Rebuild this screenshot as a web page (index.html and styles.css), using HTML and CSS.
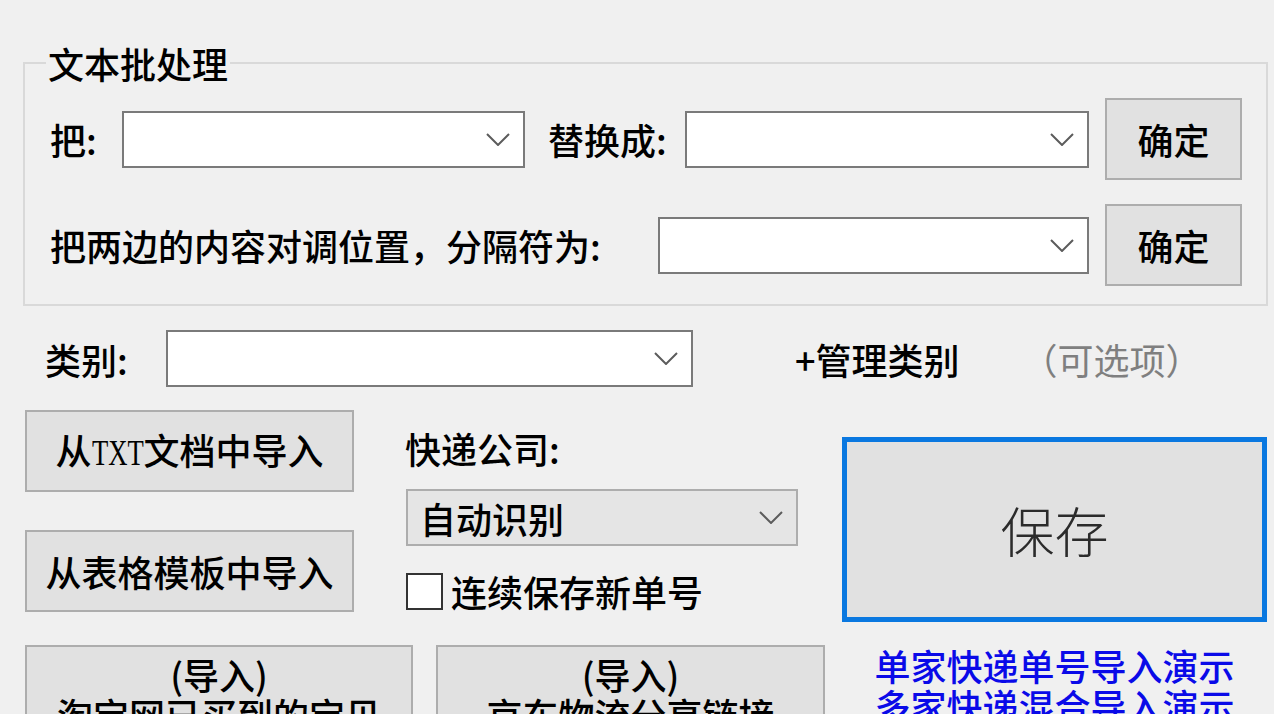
FILE: index.html
```html
<!DOCTYPE html>
<html lang="zh-CN">
<head>
<meta charset="utf-8">
<title>文本批处理</title>
<link rel="stylesheet" href="styles.css">
</head>
<body>
<div class="app">
  <fieldset class="group">
    <legend class="group-title">文本批处理</legend>
    <div class="group-row">
      <span class="lbl lbl-ba">把:</span>
      <div class="combo combo-w1"><svg class="chev" viewBox="0 0 24 13"><polyline points="1,1 12,12 23,1"/></svg></div>
      <span class="lbl lbl-replace">替换成:</span>
      <div class="combo combo-w2"><svg class="chev" viewBox="0 0 24 13"><polyline points="1,1 12,12 23,1"/></svg></div>
      <button class="btn btn-ok">确定</button>
    </div>
    <div class="group-row">
      <span class="lbl lbl-swap">把两边的内容对调位置，分隔符为:</span>
      <div class="combo combo-w3"><svg class="chev" viewBox="0 0 24 13"><polyline points="1,1 12,12 23,1"/></svg></div>
      <button class="btn btn-ok">确定</button>
    </div>
  </fieldset>

  <div class="cat-row">
    <span class="lbl lbl-cat">类别:</span>
    <div class="combo combo-cat"><svg class="chev" viewBox="0 0 24 13"><polyline points="1,1 12,12 23,1"/></svg></div>
    <span class="manage">+管理类别</span>
    <span class="optional">（可选项）</span>
  </div>

  <div class="main">
    <div class="left">
      <div class="left-top">
        <div class="col-import">
          <button class="btn btn-import">从<span class="txt">TXT</span>文档中导入</button>
          <button class="btn btn-import">从表格模板中导入</button>
        </div>
        <div class="col-express">
          <div class="lbl express-lbl">快递公司:</div>
          <div class="combo combo-list"><span>自动识别</span><svg class="chev" viewBox="0 0 24 13"><polyline points="1,1 12,12 23,1"/></svg></div>
          <label class="check"><span class="box"></span><span>连续保存新单号</span></label>
        </div>
      </div>
      <div class="left-bottom">
        <button class="btn btn-wide btn-taobao"><span>(导入)</span><span>淘宝网已买到的宝贝</span></button>
        <button class="btn btn-wide btn-jd"><span>(导入)</span><span>京东物流分享链接</span></button>
      </div>
    </div>
    <div class="right">
      <button class="btn-save">保存</button>
      <a class="demo-link demo-first" href="#">单家快递单号导入演示</a>
      <a class="demo-link" href="#">多家快递混合导入演示</a>
    </div>
  </div>
</div>
</body>
</html>
```

FILE: styles.css
```css
* { box-sizing: border-box; }
html, body { margin: 0; padding: 0; }
body {
  background: #f0f0f0;
  font-family: "Noto Sans CJK SC", "Microsoft YaHei", sans-serif;
  font-size: 36px;
  font-weight: 500;
  line-height: 40px;
  color: #000;
  width: 1274px;
  height: 714px;
  overflow: hidden;
}
.app { padding: 43px 0 0 23px; }

.group {
  margin: 0;
  width: 1245px;
  border: 2px solid #d9d9d9;
  padding: 15px 24px 18px 25px;
  min-width: 0;
}
.group-title {
  padding: 0 2px;
  margin-left: -4px;
  font-size: 36px;
  line-height: 40px;
}
.group-row { display: flex; align-items: center; height: 82px; }
.group-row + .group-row { margin-top: 24px; }

.lbl { white-space: nowrap; flex: none; }
.lbl-ba { width: 72px; }
.lbl-replace { width: 137px; margin-left: 23px; }
.lbl-swap { width: 608px; }

.combo {
  flex: none;
  height: 57px;
  background: #fff;
  border: 2px solid #7a7a7a;
  display: flex;
  align-items: center;
  justify-content: flex-end;
  padding-right: 13px;
}
.combo-w1 { width: 403px; }
.combo-w2 { width: 404px; }
.combo-w3 { width: 431px; }
.chev { width: 24px; height: 13px; flex: none; }
.chev polyline { fill: none; stroke: #5c5c5c; stroke-width: 2; }

.btn {
  font: inherit;
  color: #000;
  background: #e1e1e1;
  border: 2px solid #adadad;
  padding: 0;
  margin: 0;
  flex: none;
}
.btn-ok { width: 137px; height: 82px; margin-left: 16px; }

.cat-row {
  display: flex;
  align-items: center;
  height: 57px;
  margin: 24px 0 0 22px;
}
.lbl-cat { width: 121px; }
.combo-cat { width: 527px; }
.manage { margin-left: 102px; white-space: nowrap; }
.optional { margin-left: 62px; color: #7f7f7f; font-weight: 400; white-space: nowrap; }

.main { display: flex; align-items: flex-start; margin: 23px 0 0 2px; }
.left { width: 800px; flex: none; }
.left-top { display: flex; align-items: flex-start; }
.col-import { width: 329px; flex: none; display: flex; flex-direction: column; gap: 38px; }
.btn-import { width: 329px; height: 82px; white-space: nowrap; }
.txt {
  display: inline-block;
  width: 52px;
  font-family: "Liberation Serif", serif;
  font-size: 36px;
  font-weight: 400;
  transform: scaleX(0.74);
  transform-origin: left center;
  text-align: left;
  white-space: nowrap;
}

.col-express {
  margin-left: 51px;
  width: 393px;
  flex: none;
  display: flex;
  flex-direction: column;
  align-items: flex-start;
}
.express-lbl { margin-top: 18px; }
.combo-list {
  margin: 21px 0 0 1px;
  width: 392px;
  background: #e5e5e5;
  border-color: #adadad;
  justify-content: space-between;
  padding-left: 12px;
}
.check { display: flex; align-items: center; height: 40px; margin: 25px 0 0 1px; white-space: nowrap; }
.box { width: 37px; height: 37px; border: 2px solid #333; background: #fff; margin-right: 8px; flex: none; }

.left-bottom { display: flex; gap: 23px; margin-top: 33px; }
.btn-wide {
  height: 110px;
  padding-top: 7px;
  display: flex;
  flex-direction: column;
  align-items: center;
  justify-content: flex-start;
  white-space: nowrap;
}
.btn-taobao { width: 388px; }
.btn-jd { width: 389px; }

.right {
  margin-left: 17px;
  width: 425px;
  flex: none;
  display: flex;
  flex-direction: column;
  align-items: center;
}
.btn-save {
  margin-top: 27px;
  width: 425px;
  height: 185px;
  border: 5px solid #0a78e0;
  background: #e1e1e1;
  font-family: "Noto Sans CJK SC", "Microsoft YaHei", sans-serif;
  font-size: 54px;
  font-weight: 300;
  color: #2b2b2b;
  padding: 0;
}
.demo-link { color: #0a0ae8; text-decoration: none; line-height: 40px; white-space: nowrap; }
.demo-first { margin-top: 23px; }
```
